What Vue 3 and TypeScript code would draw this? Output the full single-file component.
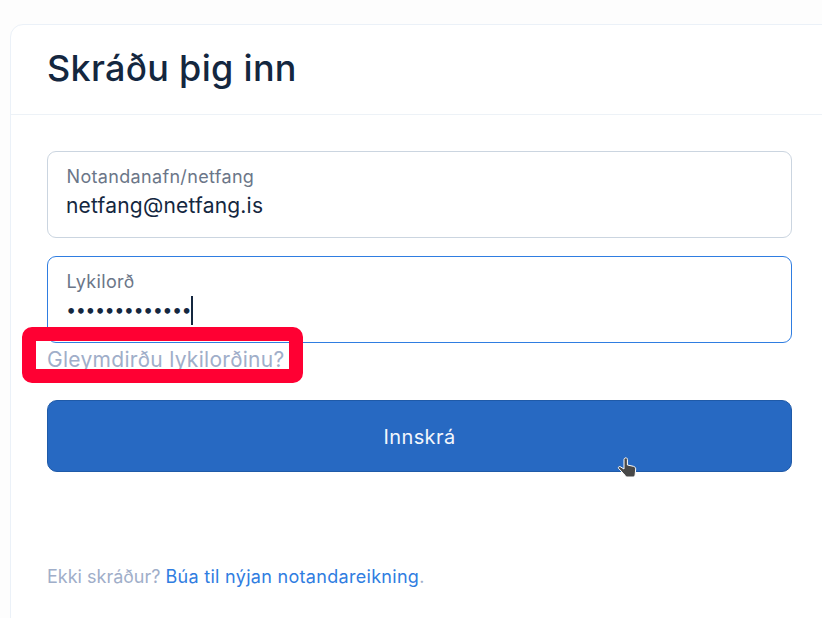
<script setup lang="ts">
const title = "Skráðu þig inn";
const dots = "•".repeat(13);
</script>

<template>
  <div class="page">
    <section class="card">
      <header class="card-head">
        <h1>{{ title }}</h1>
      </header>
      <div class="card-body">
        <div class="field">
          <span class="label">Notandanafn/netfang</span>
          <span class="value">netfang@netfang.is</span>
        </div>
        <div class="field focused">
          <span class="label">Lykilorð</span>
          <span class="value password"><span class="dots">{{ dots }}</span><i class="caret"></i></span>
        </div>
        <div class="forgot-row">
          <a class="forgot">Gleymdirðu lykilorðinu?</a>
          <span class="marker" aria-hidden="true"></span>
        </div>
        <div class="button-wrap">
          <button class="submit" type="button">Innskrá</button>
          <svg class="pointer" width="22" height="23" viewBox="0 0 22 23" aria-hidden="true">
            <path d="M8 1c1.200-.6 2.400.2 2.400 1.400V8l6 1.300c1.400.4 2.300 1.300 2.300 2.600l-.5 5.300c-.1 1-.5 1.900-1.100 2.800H9.500c-1-1-1.800-2-2.800-3.200L1.600 11.400c-.8-1 .4-2.300 1.600-1.700L7 12V2.500c0-.6.400-1.200 1-1.500z" fill="#484848" stroke="#fff" stroke-width="1"/>
          </svg>
        </div>
        <p class="signup">Ekki skráður? <a>Búa til nýjan notandareikning</a>.</p>
      </div>
    </section>
  </div>
</template>

<style>
html, body { margin: 0; background: #fff; overflow: hidden; }
</style>

<style scoped>
.page {
  width: 822px;
  height: 618px;
  overflow: hidden;
  box-sizing: border-box;
  padding: 24px 0 0 10px;
  background: #fdfdfd;
  font-family: Inter, "Open Sans", sans-serif;
  color: #1a2b42;
}
.card {
  width: 900px;
  height: 620px;
  box-sizing: border-box;
  background: #fff;
  border: 1px solid #ebf1f8;
  border-radius: 13px;
}
.card-head {
  height: 90px;
  box-sizing: border-box;
  padding: 0 36px 4px;
  display: flex;
  align-items: center;
  border-bottom: 1px solid #edf2f7;
}
h1 {
  margin: 0;
  font-size: 36px;
  font-weight: 500;
  letter-spacing: 0.3px;
  color: #14273f;
  line-height: 1;
}
.card-body {
  width: 745px;
  padding: 36px 36px 0;
}
.field {
  height: 87px;
  box-sizing: border-box;
  border: 1px solid #cbd5e0;
  border-radius: 9px;
  padding: 14px 19px;
  display: flex;
  flex-direction: column;
  margin-bottom: 18px;
}
.field.focused {
  border-color: #2f7de1;
  margin-bottom: 0;
}
.label {
  font-size: 18px;
  line-height: 22px;
  letter-spacing: 0.33px;
  margin-left: -0.5px;
  color: #6b7688;
}
.value {
  font-size: 21px;
  line-height: 32px;
  letter-spacing: 0.2px;
  margin: 2px 0 0 -1px;
  color: #14273f;
}
.password {
  display: flex;
  align-items: center;
  height: 32px;
  margin-top: 1px;
}
.dots {
  font-family: "DejaVu Sans", sans-serif;
  font-size: 16px;
  font-weight: 700;
  letter-spacing: -0.6px;
  margin-top: 4px;
}
.caret {
  display: block;
  width: 2px;
  height: 29px;
  background: #14273f;
}
.forgot-row {
  position: relative;
  height: 57px;
  padding-top: 5px;
  box-sizing: border-box;
}
.forgot {
  font-size: 21px;
  line-height: 24px;
  letter-spacing: 0.3px;
  color: #a0aec9;
}
.marker {
  position: absolute;
  left: -25px;
  top: -16px;
  width: 281px;
  height: 56px;
  box-sizing: border-box;
  border: 14px solid #ff0033;
  border-radius: 10px;
}
.button-wrap {
  position: relative;
}
.submit {
  display: block;
  width: 100%;
  height: 72px;
  padding-top: 2px;
  border: 1px solid #1f5aa8;
  border-radius: 10px;
  background: #2769c2;
  color: #f2f6fc;
  font-family: inherit;
  font-size: 20px;
  font-weight: 400;
  letter-spacing: 0.4px;
}
.pointer {
  position: absolute;
  left: 570px;
  top: 57px;
}
.signup {
  margin: 93px 0 0;
  font-size: 18px;
  line-height: 24px;
  color: #a0aec9;
}
.signup a {
  color: #2f7de1;
  letter-spacing: 0.3px;
}
</style>
